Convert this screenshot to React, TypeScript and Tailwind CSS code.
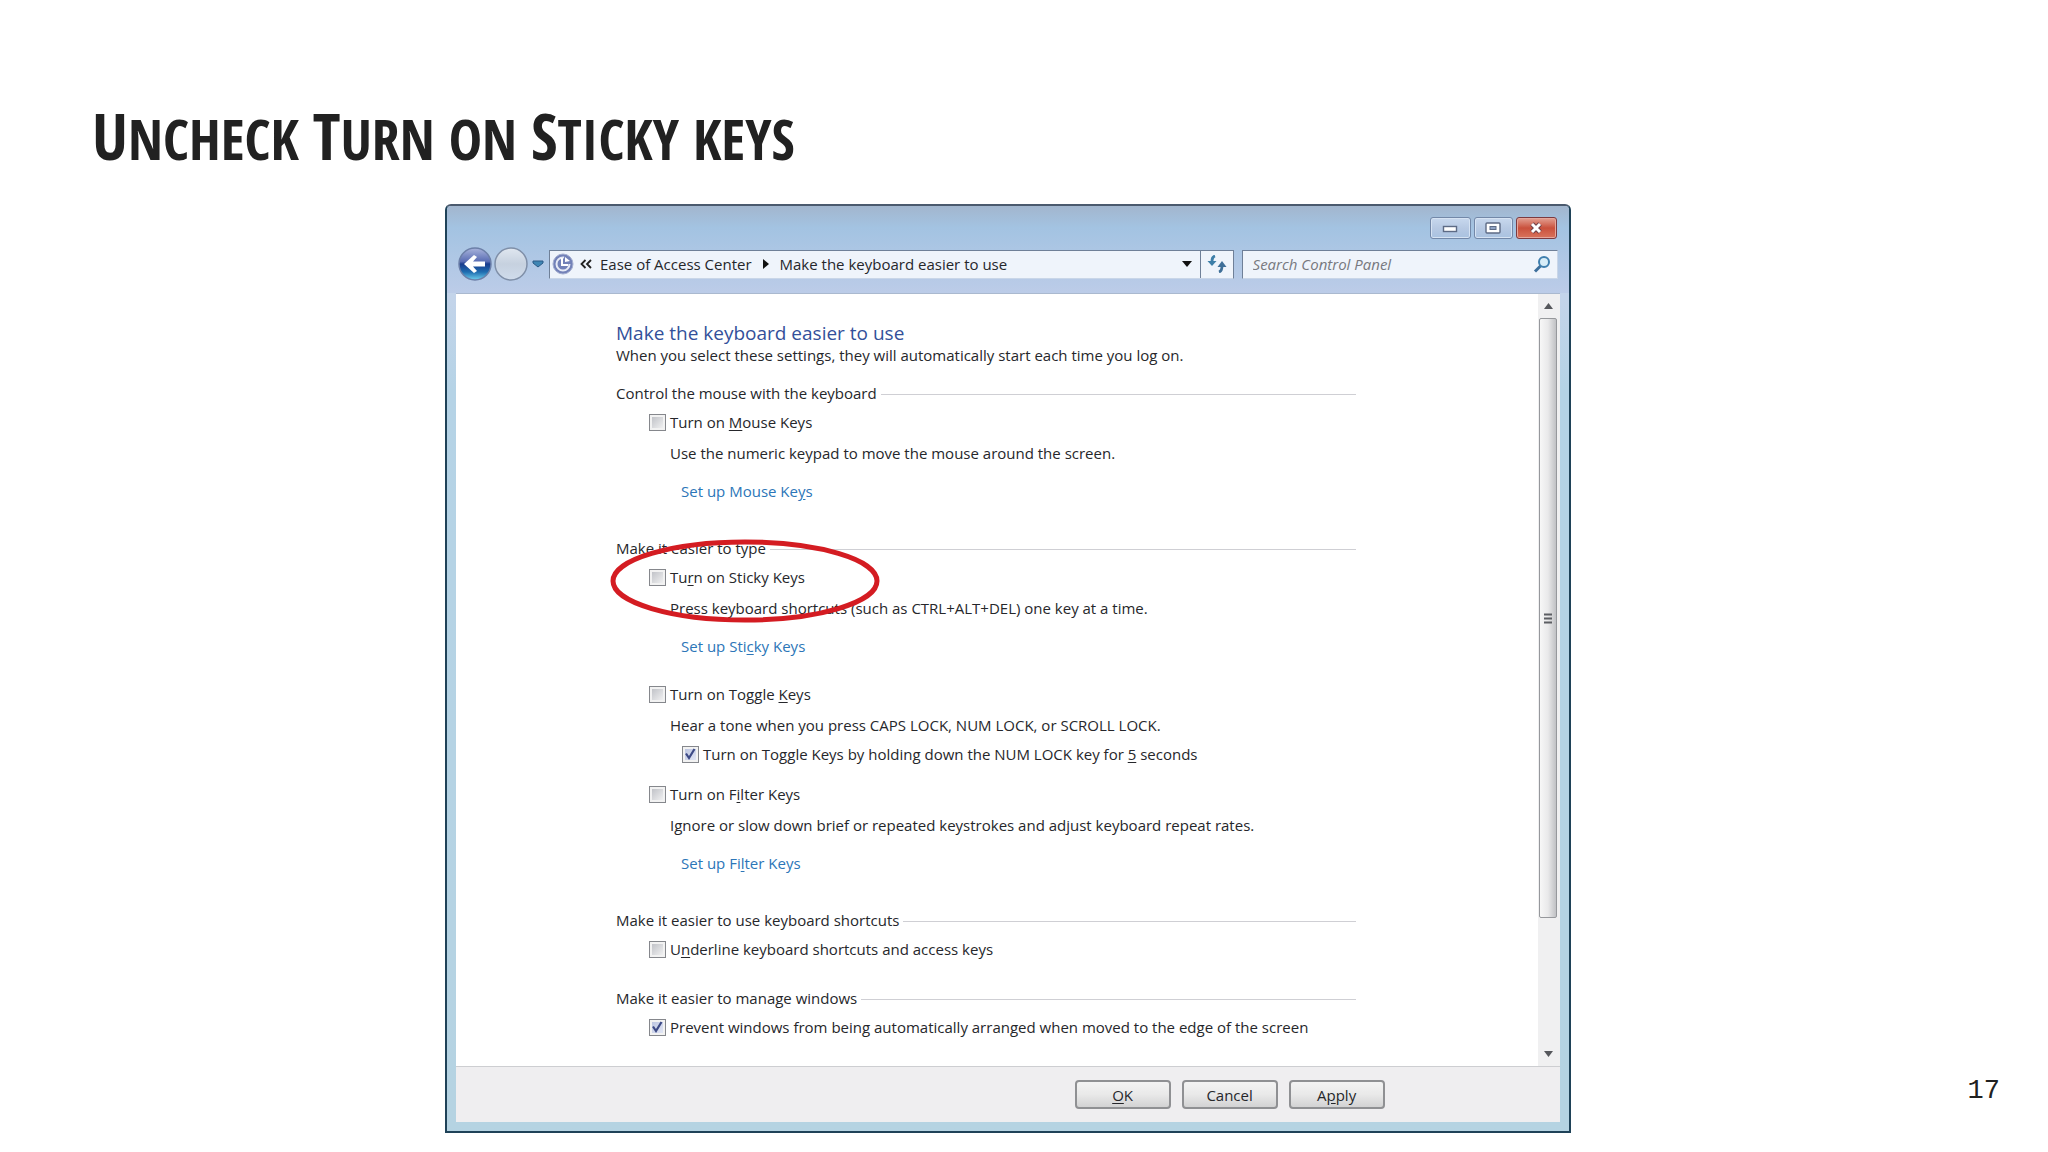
import React from "react";

type CheckProps = { id: string; on?: boolean; children: React.ReactNode };

function Check({ id, on, children }: CheckProps) {
  return (
    <div className="flex h-5 items-center gap-1">
      <span className="relative flex size-[18px] items-center justify-center">
        <input
          id={id}
          type="checkbox"
          defaultChecked={on}
          className="peer size-[17px] appearance-none border border-[#85878c] bg-linear-to-br from-[#b9bbc1] to-[#f8f8f8] shadow-[inset_0_0_0_2px_#f2f2f2] checked:from-[#b7c0de] checked:to-[#e8ecf8]"
        />
        <svg
          viewBox="0 0 18 18"
          className="pointer-events-none absolute inset-0 hidden size-[18px] peer-checked:block"
          aria-hidden="true"
        >
          <path d="M5 8.5 L8 13 L13.5 4" fill="none" stroke="#3d4a86" strokeWidth="2.2" />
        </svg>
      </span>
      <label htmlFor={id} className="whitespace-nowrap">
        {children}
      </label>
    </div>
  );
}

function Section({ title }: { title: string }) {
  return (
    <div className="flex h-5 items-center gap-1">
      <h2 className="whitespace-nowrap">{title}</h2>
      <span className="mt-[2px] h-px flex-1 bg-[#cfcfd4]" />
    </div>
  );
}

function Note({ children }: { children: React.ReactNode }) {
  return <p className="mt-[11px] pl-[22px] whitespace-nowrap">{children}</p>;
}

function SetUp({ children }: { children: React.ReactNode }) {
  return (
    <p className="mt-[18px] pl-[33px]">
      <a href="#" className="text-[#2c76b8]">
        {children}
      </a>
    </p>
  );
}

function K({ children }: { children: React.ReactNode }) {
  return <span className="underline underline-offset-2">{children}</span>;
}

function NavButtons() {
  return (
    <div className="flex w-[90px] items-center">
      <button aria-label="Back">
        <svg width="36" height="36" viewBox="0 0 36 36">
          <defs>
            <linearGradient id="back" x1="0" y1="0" x2="0" y2="1">
              <stop offset="0" stopColor="#a9b4dc" />
              <stop offset="0.42" stopColor="#5a6db4" />
              <stop offset="0.5" stopColor="#1a3c8c" />
              <stop offset="0.75" stopColor="#1f6db0" />
              <stop offset="1" stopColor="#6fd0ee" />
            </linearGradient>
          </defs>
          <circle cx="18" cy="18" r="16" fill="url(#back)" stroke="#6c7fa8" strokeWidth="1.5" />
          <path d="M7 18 L17 9 L20 11 L16 15.5 H28 V20.5 H16 L20 25 L17 27 Z" fill="#fff" />
        </svg>
      </button>
      <button aria-label="Forward">
        <svg width="36" height="36" viewBox="0 0 36 36">
          <defs>
            <linearGradient id="fwd" x1="0" y1="0" x2="0" y2="1">
              <stop offset="0" stopColor="#e0e7f0" />
              <stop offset="0.5" stopColor="#c6d1df" />
              <stop offset="1" stopColor="#d0dcec" />
            </linearGradient>
          </defs>
          <circle cx="18" cy="18" r="16" fill="url(#fwd)" stroke="#7f8fa8" strokeWidth="1.5" />
        </svg>
      </button>
      <button aria-label="Recent pages" className="ml-[3px]">
        <svg width="12" height="8" viewBox="0 0 12 8">
          <path d="M1 1 H11 V3 L6 7 L1 3 Z" fill="#3f86b4" stroke="#2a5a86" />
        </svg>
      </button>
    </div>
  );
}

function TitleButtons() {
  const base =
    "flex h-[22px] items-center justify-center rounded-[3px] border border-[#7388a8] bg-linear-to-b from-[#c8d8ee] via-[#b7c9e3] via-50% to-[#a9c2e0] shadow-[inset_0_0_0_1px_#d6e3f3]";
  return (
    <div className="flex justify-end gap-[3px] pr-[2px]">
      <button aria-label="Minimize" className={base + " w-[41px]"}>
        <svg width="16" height="10" viewBox="0 0 16 10">
          <rect x="1.5" y="3.5" width="13" height="5" fill="#fff" stroke="#5d6b85" strokeWidth="1.4" />
        </svg>
      </button>
      <button aria-label="Maximize" className={base + " w-[39px]"}>
        <svg width="16" height="12" viewBox="0 0 16 12">
          <rect x="1" y="1" width="14" height="10" rx="1" fill="#fff" stroke="#5d6b85" strokeWidth="1.4" />
          <rect x="5" y="4.5" width="6" height="3" fill="#8fa3c4" stroke="#5d6b85" />
        </svg>
      </button>
      <button
        aria-label="Close"
        className="flex h-[22px] w-[41px] items-center justify-center rounded-[3px] border border-[#7c3a40] bg-linear-to-b from-[#e2a093] via-[#c9503c] via-50% to-[#d9735c] shadow-[inset_0_0_0_1px_#e5a79c]"
      >
        <svg width="14" height="12" viewBox="0 0 14 12">
          <path d="M3 2 L11 10 M11 2 L3 10" stroke="#6d4048" strokeWidth="5" />
          <path d="M3 2 L11 10 M11 2 L3 10" stroke="#fff" strokeWidth="3" />
        </svg>
      </button>
    </div>
  );
}

function AddressBar() {
  return (
    <div className="flex h-[29px] flex-1 border border-[#6f8098] border-b-[#c9d6e8] bg-[#eff4fb]">
      <div className="flex flex-1 items-center pl-[2px] whitespace-nowrap">
        <svg width="22" height="22" viewBox="0 0 22 22" aria-hidden="true">
          <circle cx="11" cy="11" r="10" fill="#7281b8" stroke="#a4aed0" />
          <circle cx="11" cy="11" r="6.5" fill="none" stroke="#e6eaf6" strokeWidth="2" strokeDasharray="31 10" />
          <path d="M10 5 V12 H16" fill="none" stroke="#fff" strokeWidth="2" />
          <path d="M13 4 L18 8 L13 9 Z" fill="#fff" />
        </svg>
        <svg width="12" height="10" viewBox="0 0 12 10" className="ml-[6px]" aria-hidden="true">
          <path d="M5.5 1 L1.5 5 L5.5 9 M11 1 L7 5 L11 9" fill="none" stroke="#222" strokeWidth="1.8" />
        </svg>
        <a href="#" className="ml-2">
          Ease of Access Center
        </a>
        <svg width="6" height="10" viewBox="0 0 6 10" className="mx-[11px]" aria-hidden="true">
          <path d="M0 0 L6 5 L0 10 Z" fill="#111" />
        </svg>
        <a href="#">Make the keyboard easier to use</a>
      </div>
      <button aria-label="Previous locations" className="flex w-[26px] items-center justify-center">
        <svg width="10" height="6" viewBox="0 0 10 6">
          <path d="M0 0 H10 L5 6 Z" fill="#111" />
        </svg>
      </button>
      <button
        aria-label="Refresh"
        className="flex w-[33px] items-center justify-center border-l border-[#6f8098]"
      >
        <svg width="20" height="18" viewBox="0 0 20 18">
          <path d="M8 1 C5 2 5 4 5 7" fill="none" stroke="#3e7fa8" strokeWidth="2.8" />
          <path d="M0.500 6 H9.500 L5 11 Z" fill="#3e7fa8" />
          <path d="M12 17 C15 16 15 13 15 11" fill="none" stroke="#3f6f98" strokeWidth="2.8" />
          <path d="M10.500 12 H19.500 L15 6 Z" fill="#3f6f98" />
        </svg>
      </button>
    </div>
  );
}

function SearchBox() {
  return (
    <div className="flex h-[29px] w-[316px] items-center border border-[#6f8098] border-r-[#c9d6e8] border-b-[#c9d6e8] bg-[#eff4fb] pr-[6px] pl-[10px]">
      <input
        aria-label="Search Control Panel"
        placeholder="Search Control Panel"
        className="min-w-0 flex-1 bg-transparent italic outline-none placeholder:text-[#77797f]"
      />
      <svg width="18" height="18" viewBox="0 0 18 18" aria-hidden="true">
        <path d="M8 10.5 L2 16.5" stroke="#3d6f9c" strokeWidth="3" />
        <circle cx="11" cy="7" r="5" fill="#d7edf8" stroke="#3f7fae" strokeWidth="2" />
      </svg>
    </div>
  );
}

function ScrollBar() {
  return (
    <div className="flex w-[22px] flex-col items-start bg-[#f0f0f1]">
      <button aria-label="Scroll up" className="flex h-6 w-full items-center justify-center">
        <svg width="9" height="6" viewBox="0 0 9 6">
          <path d="M0 6 L4.5 0 L9 6 Z" fill="#55575c" />
        </svg>
      </button>
      <div className="ml-px flex h-[600px] w-[18px] items-center justify-center rounded-[2px] border border-[#96989c] bg-linear-to-r from-[#f7f7f7] via-[#e9e9ea] via-50% to-[#c0c1c4]">
        <svg width="8" height="11" viewBox="0 0 8 11" aria-hidden="true">
          <path d="M0 1.5 H8 M0 5.5 H8 M0 9.5 H8" stroke="#5c5e63" strokeWidth="2" />
        </svg>
      </div>
      <button aria-label="Scroll down" className="mt-auto flex h-6 w-full items-center justify-center">
        <svg width="9" height="6" viewBox="0 0 9 6">
          <path d="M0 0 L4.5 6 L9 0 Z" fill="#55575c" />
        </svg>
      </button>
    </div>
  );
}

function DialogButton({ children }: { children: React.ReactNode }) {
  return (
    <button className="h-[29px] w-24 rounded-[4px] border-2 border-[#8f9093] bg-linear-to-b from-[#f3f3f3] via-[#e9e9e9] via-50% to-[#d2d2d3]">
      {children}
    </button>
  );
}

function SettingsWindow() {
  return (
    <div className="flex flex-col overflow-hidden rounded-t-[6px] border-2 border-[#1f4258] border-t-[#4b5a6e] bg-linear-to-b from-[#c3d4ea] from-10% via-[#b5d3e6] via-20% to-[#b5d3e2] text-[15px] leading-5 text-[#26272b]">
      <div className="bg-linear-to-b from-[#a2b6ce] via-[#a3c3e2] via-25% to-[#bccce8] px-[10px] pt-[11px]">
        <TitleButtons />
        <div className="mt-[6px] flex h-[38px] items-center">
          <NavButtons />
          <div className="ml-[2px] flex flex-1 gap-2 pr-px">
            <AddressBar />
            <SearchBox />
          </div>
        </div>
        <div className="h-[10px]" />
      </div>
      <div className="mx-[9px] mb-[9px] border-t border-[#aab9cf]">
        <div className="flex bg-white">
          <main className="flex-1 pt-[27px] pb-[29px] pl-40">
            <div className="w-[740px]">
              <h1 className="text-[19px] leading-6 text-[#33509a]">Make the keyboard easier to use</h1>
              <p className="mb-[18px]">
                When you select these settings, they will automatically start each time you log on.
              </p>

              <Section title="Control the mouse with the keyboard" />
              <div className="mt-[9px] mb-[37px] pl-8">
                <Check id="mouse">
                  Turn on <K>M</K>ouse Keys
                </Check>
                <Note>Use the numeric keypad to move the mouse around the screen.</Note>
                <SetUp>
                  Set up Mouse Ke<K>y</K>s
                </SetUp>
              </div>

              <div className="relative">
                <Section title="Make it easier to type" />
                <svg
                  className="pointer-events-none absolute top-0 -left-2 overflow-visible"
                  width="272"
                  height="88"
                  viewBox="0 0 272 88"
                  aria-hidden="true"
                >
                  <ellipse cx="137" cy="43" rx="132" ry="39" fill="none" stroke="#d41c22" strokeWidth="5" />
                </svg>
              </div>
              <div className="mt-[9px] mb-[37px] pl-8">
                <Check id="sticky">
                  Tu<K>r</K>n on Sticky Keys
                </Check>
                <Note>Press keyboard shortcuts (such as CTRL+ALT+DEL) one key at a time.</Note>
                <SetUp>
                  Set up Sti<K>c</K>ky Keys
                </SetUp>
                <div className="mt-7">
                  <Check id="toggle">
                    Turn on Toggle <K>K</K>eys
                  </Check>
                  <Note>Hear a tone when you press CAPS LOCK, NUM LOCK, or SCROLL LOCK.</Note>
                  <div className="mt-[9px] pl-[33px]">
                    <Check id="toggle-hold" on>
                      Turn on Toggle Keys by holding down the NUM LOCK key for <K>5</K> seconds
                    </Check>
                  </div>
                </div>
                <div className="mt-5">
                  <Check id="filter">
                    Turn on F<K>i</K>lter Keys
                  </Check>
                  <Note>Ignore or slow down brief or repeated keystrokes and adjust keyboard repeat rates.</Note>
                  <SetUp>
                    Set up Fi<K>l</K>ter Keys
                  </SetUp>
                </div>
              </div>

              <Section title="Make it easier to use keyboard shortcuts" />
              <div className="mt-[9px] mb-[29px] pl-8">
                <Check id="underline">
                  U<K>n</K>derline keyboard shortcuts and access keys
                </Check>
              </div>

              <Section title="Make it easier to manage windows" />
              <div className="mt-[9px] pl-8">
                <Check id="snap" on>
                  Prevent windows from being automatically arranged when moved to the edge of the screen
                </Check>
              </div>
            </div>
          </main>
          <ScrollBar />
        </div>
        <footer className="flex justify-end gap-[11px] border-t border-[#cdced1] bg-[#efeef0] pt-[13px] pr-[175px] pb-[13px]">
          <DialogButton>
            <K>O</K>K
          </DialogButton>
          <DialogButton>Cancel</DialogButton>
          <DialogButton>
            A<K>p</K>ply
          </DialogButton>
        </footer>
      </div>
    </div>
  );
}

export default function App() {
  return (
    <div className="flex min-h-screen flex-col bg-white font-['Open_Sans','Noto_Sans',sans-serif]">
      <header className="h-[204px] pt-[92px] pl-[92px]">
        <p className="font-['Open_Sans_Condensed','Roboto_Condensed',sans-serif] text-[56px] leading-[88px] font-bold whitespace-nowrap text-[#212121] uppercase">
          <span className="text-[64px]">U</span>ncheck <span className="text-[64px]">T</span>urn on{" "}
          <span className="text-[64px]">S</span>ticky keys
        </p>
      </header>
      <div className="flex items-end">
        <div className="mr-[397px] ml-[445px] flex-1">
          <SettingsWindow />
        </div>
        <p className="mr-12 mb-7 font-['Liberation_Mono',monospace] text-[27px] leading-7 text-[#212121]">17</p>
      </div>
    </div>
  );
}
